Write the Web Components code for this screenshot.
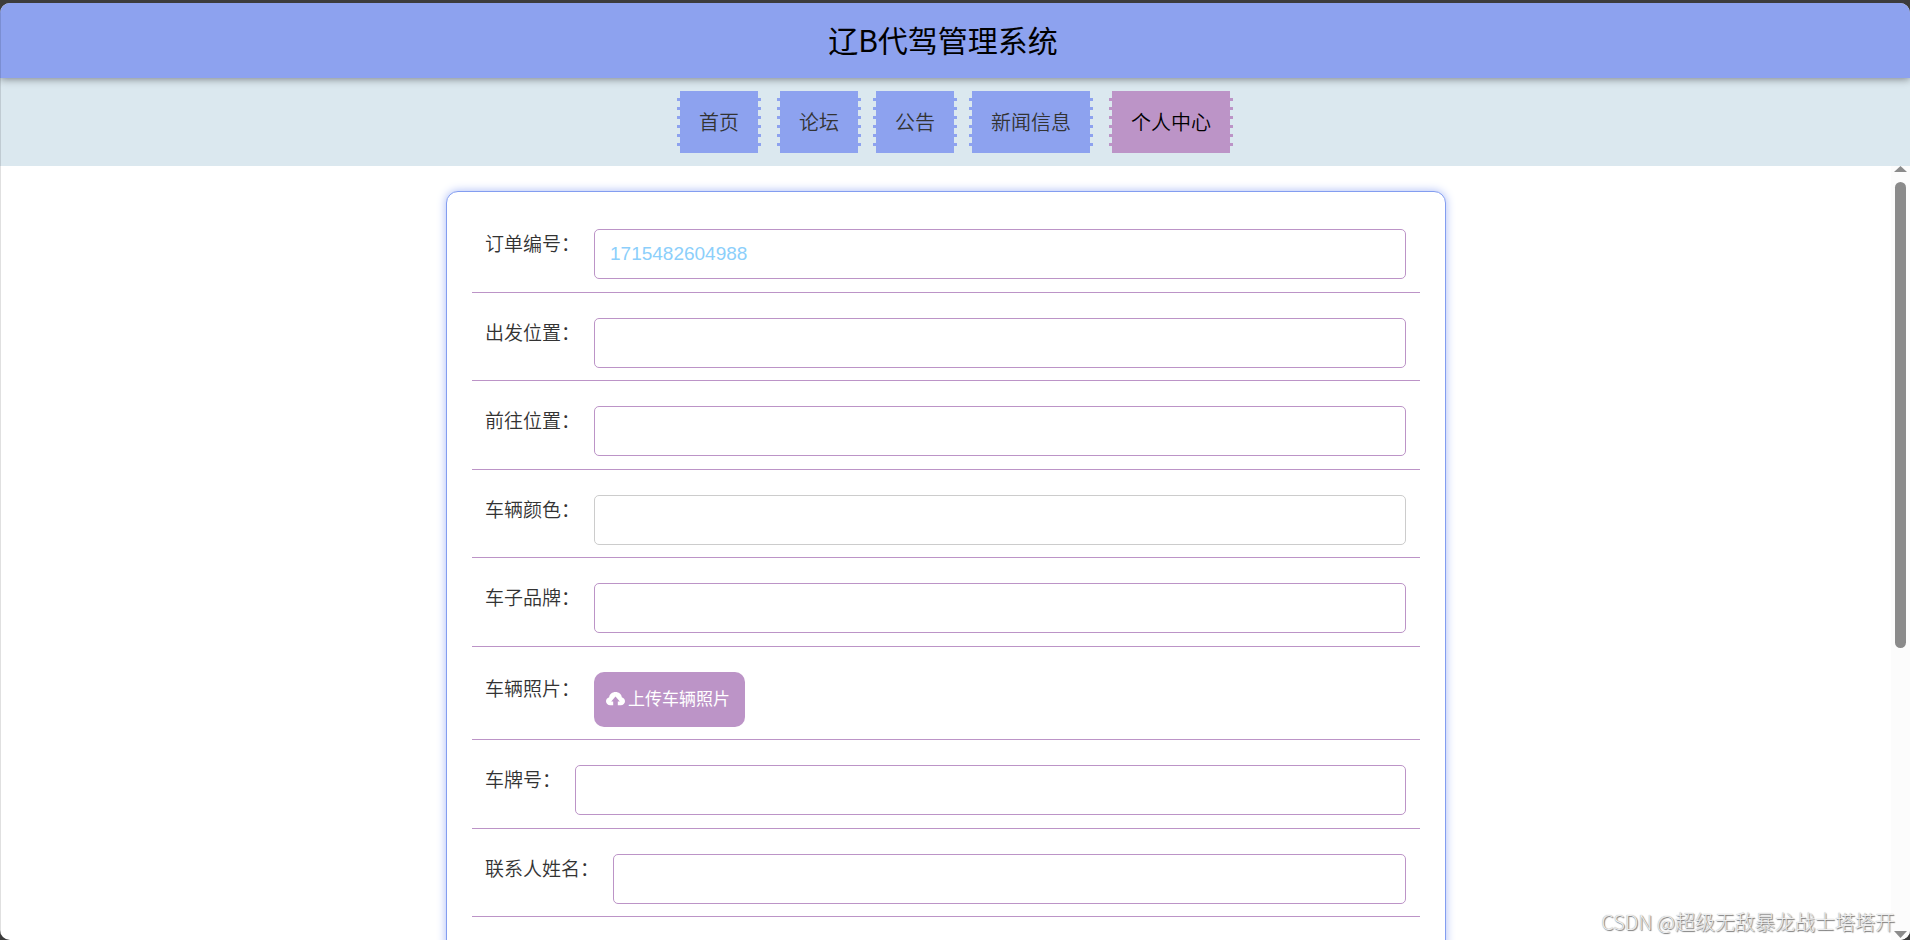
<!DOCTYPE html>
<html lang="zh-CN">
<head>
<meta charset="utf-8">
<title>辽B代驾管理系统</title>
<style>
html, body { height: 100%; }
body {
  margin: 0;
  background: #3c3c3c;
  font-family: "Noto Sans CJK SC", sans-serif;
  color: #333;
  --blue: #8da2ef;
  --purple: #bc94c7;
}
</style>
</head>
<body>
<app-shell>
  <site-header slot="top">辽B代驾管理系统</site-header>
  <site-nav slot="top">
    <nav-item>首页</nav-item>
    <nav-item>论坛</nav-item>
    <nav-item>公告</nav-item>
    <nav-item>新闻信息</nav-item>
    <nav-item active>个人中心</nav-item>
  </site-nav>
  <form-card>
    <form-row label="订单编号：" value="1715482604988"></form-row>
    <form-row label="出发位置："></form-row>
    <form-row label="前往位置："></form-row>
    <form-row label="车辆颜色：" plain></form-row>
    <form-row label="车子品牌："></form-row>
    <upload-row label="车辆照片：">上传车辆照片</upload-row>
    <form-row label="车牌号："></form-row>
    <form-row label="联系人姓名："></form-row>
  </form-card>
  <scroll-rail slot="rail"></scroll-rail>
  <page-mark slot="mark">CSDN @超级无敌暴龙战士塔塔开</page-mark>
</app-shell>

<script>
const define = (name, html, setup) => {
  const tpl = document.createElement('template');
  tpl.innerHTML = html;
  customElements.define(name, class extends HTMLElement {
    constructor() {
      super();
      this.attachShadow({ mode: 'open' }).append(tpl.content.cloneNode(true));
    }
    connectedCallback() { if (setup) setup(this, this.shadowRoot); }
  });
};

define('app-shell', `
<style>
:host { display: block; box-sizing: border-box; height: 100%; padding-top: 3px; }
.window { position: relative; display: flex; flex-direction: column; height: 100%; background: #fff; border-radius: 10px; overflow: hidden; }
.window::after { content: ""; position: absolute; inset: 0 auto 0 0; width: 1px; background: rgba(0,0,0,.12); z-index: 3; }
.body { flex: 1; min-height: 0; display: flex; }
main { flex: 1; min-width: 0; overflow: hidden; padding: 25px 0 0 1px; }
</style>
<div class="window">
  <slot name="top"></slot>
  <div class="body"><main><slot></slot></main><slot name="rail"></slot></div>
  <slot name="mark"></slot>
</div>`);

define('site-header', `
<style>
:host { display: block; position: relative; z-index: 1; background: var(--blue); box-shadow: 0 1px 8px rgba(0,0,0,.45); }
h1 { margin: 0; padding: 0 24px 2px 0; font-size: 30px; font-weight: 400; line-height: 73px; text-align: center; color: #000; }
</style>
<h1><slot></slot></h1>`);

define('site-nav', `
<style>
:host { display: block; background: #dbe8ef; }
nav { display: flex; justify-content: center; gap: 12px; padding: 13px 0; }
::slotted(:first-child) { margin-right: 4px; }
::slotted(:last-child) { margin-left: 4px; }
</style>
<nav><slot></slot></nav>`);

define('nav-item', `
<style>
:host { display: block; --fill: var(--blue); color: #333; }
:host([active]) { --fill: var(--purple); color: #000; }
a {
  display: block; padding: 0 22px; font-size: 20px; font-weight: 350; line-height: 62px; color: inherit; text-decoration: none;
  background:
    linear-gradient(var(--fill), var(--fill)) center / calc(100% - 6px) 100% no-repeat,
    repeating-linear-gradient(var(--fill) 0 3px, transparent 3px 9px) 0 7px / 100% 50px no-repeat;
}
</style>
<a href="#"><slot></slot></a>`);

define('form-card', `
<style>
:host { display: block; width: 948px; max-width: 100%; min-height: 100%; margin: 0 auto; padding: 12px 25px 25px; border: 1px solid #839df0; border-radius: 12px; box-shadow: 0 0 10px #a9baf6; background: #fff; }
::slotted(:nth-child(odd)) { padding-bottom: 13px; }
</style>
<slot></slot>`);

const rowStyle = `
:host { display: flex; align-items: flex-start; padding: 25px 14px 12px 13px; border-bottom: 1px solid var(--purple); }
label { flex: none; margin-right: 14px; font-size: 19px; font-weight: 350; line-height: 28px; color: #333; }
`;

define('form-row', `
<style>${rowStyle}
input { flex: 1; min-width: 0; height: 50px; box-sizing: border-box; margin: 0; padding: 0 15px; border: 1px solid var(--purple); border-radius: 5px; outline: 0; background: #fff; color: #8ccffb; font: 19px "Liberation Sans", Arial, sans-serif; }
:host([plain]) input { border-color: #ccc; }
</style>
<label for="field"></label><input id="field" type="text">`, (el, root) => {
  root.querySelector('label').textContent = el.getAttribute('label');
  root.querySelector('input').value = el.getAttribute('value') || '';
});

define('upload-row', `
<style>${rowStyle}
label { padding-top: 2px; }
button { display: flex; align-items: flex-start; gap: 3px; height: 55px; margin: 0; padding: 11px 15px 11px 12px; border: 0; border-radius: 10px; background: var(--purple); color: #fff; font: 400 17px/30px "Noto Sans CJK SC", sans-serif; }
svg { width: 19px; height: 14px; margin-top: 9px; }
</style>
<label for="pick"></label>
<button id="pick" type="button">
  <svg viewBox="0 0 19 14" aria-hidden="true"><path fill="#fff" d="M3.200 5.200C3.600 2.200 6.100 0 9.500 0s5.900 2.200 6.300 5.200C17.800 5.800 19 7.400 19 9.300c0 2.300-1.800 4-4.200 4H11.800V9.600h2L9.500 4.600 5.200 9.600h2v3.700H4.200C1.800 13.300 0 11.600 0 9.300 0 7.400 1.200 5.800 3.200 5.200z"/></svg>
  <slot></slot>
</button>`, (el, root) => {
  root.querySelector('label').textContent = el.getAttribute('label');
});

define('scroll-rail', `
<style>
:host { display: flex; flex-direction: column; align-items: center; width: 19px; background: #fcfcfc; }
svg { display: block; width: 13px; height: 7px; fill: #8b8b8b; }
.track { flex: 1; width: 11px; padding: 9px 0; }
.thumb { height: 63%; border-radius: 6px; background: #8b8b8b; }
svg:last-child { margin-bottom: 2px; }
</style>
<svg viewBox="0 0 13 7"><path d="M6.500 0 13 6H0z"/></svg>
<div class="track"><div class="thumb"></div></div>
<svg viewBox="0 0 13 7"><path d="M0 0h13L6.500 7z"/></svg>`);

define('page-mark', `
<style>
:host { position: absolute; right: 15px; bottom: 3px; z-index: 4; font-size: 20px; font-weight: 300; line-height: 30px; color: #eee; text-shadow: 1px 1px 1px #777, 0 0 1px #999; white-space: nowrap; pointer-events: none; }
</style>
<slot></slot>`);
</script>
</body>
</html>
